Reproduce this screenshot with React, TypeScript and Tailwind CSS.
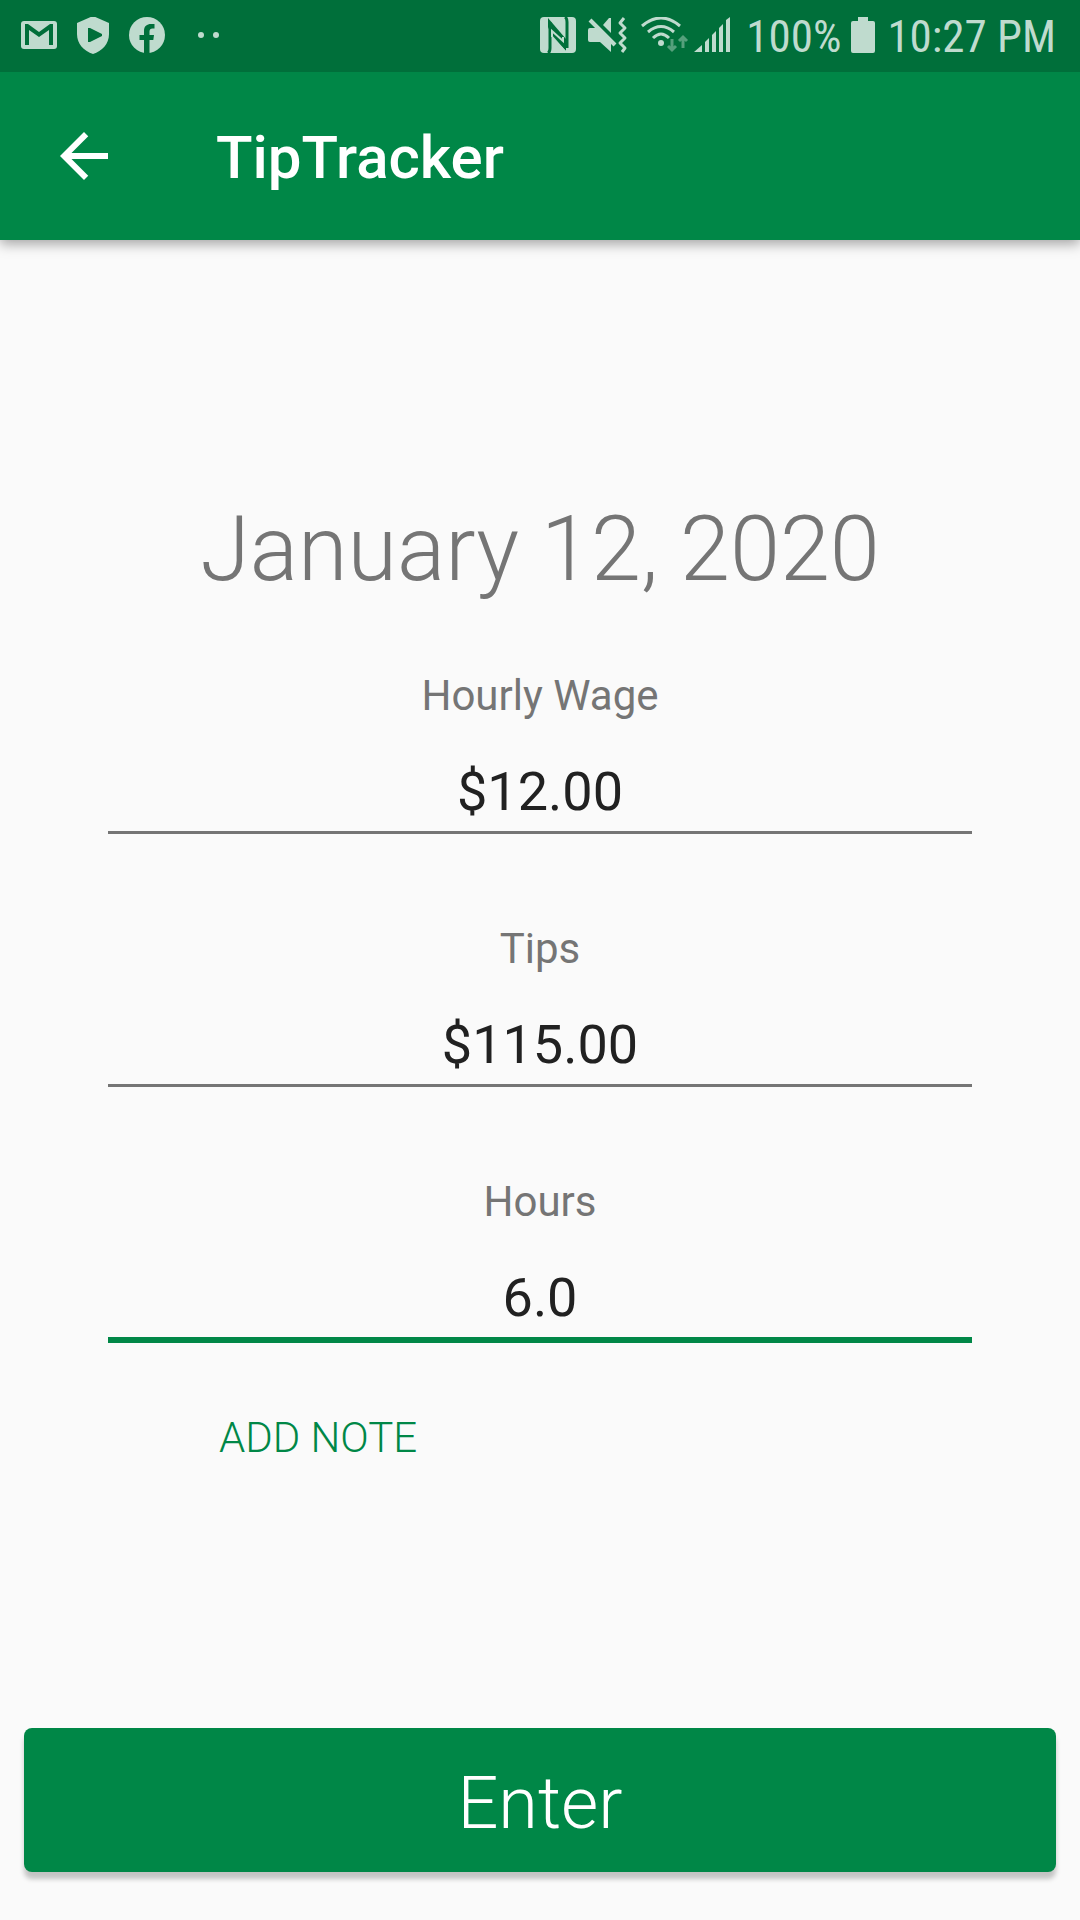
import React from "react"

interface FieldProps {
  id: string
  label: string
  value: string
  autoFocus?: boolean
}

const StatusBar = () => {
  return (
    <div className="flex h-[72px] items-center justify-between bg-[#006f3a] pl-5 pr-6 text-[#bfdbce]">
      <div className="flex items-center">
        <svg width="38" height="38" viewBox="0 0 38 38" fill="none">
          <rect x="1" y="4" width="36" height="28" rx="3" fill="currentColor" />
          <path d="M5 28V7H8L19 15L30 7H33V28H29V13L19 20L9 13V28Z" fill="#006f3a" />
        </svg>
        <svg width="34" height="38" viewBox="0 0 34 38" className="ml-[18px]">
          <path
            d="M17 -1L33 6V17C33 27 26 34 17 37C8 34 1 27 1 17V6Z"
            fill="currentColor"
          />
          <path
            d="M12 11H14L26 17V19L14 25H12Z"
            fill="#006f3a"
          />
        </svg>
        <svg width="36" height="38" viewBox="0 0 36 38" className="ml-[19px]">
          <circle cx="18" cy="18" r="18" fill="currentColor" />
          <path
            d="M15 37V23H10.500V18H15V14C15 9 18 7 22 7H25.500V11.500H23.500C21.500 11.500 20.500 12.500 20.500 14.500V18H25L24.300 23H20.500V37Z"
            fill="#006f3a"
          />
        </svg>
        <svg width="24" height="10" viewBox="0 0 24 10" className="ml-8">
          <circle cx="4" cy="4" r="3" fill="currentColor" />
          <circle cx="19" cy="4" r="3" fill="currentColor" />
        </svg>
      </div>
      <div className="flex items-center">
        <svg width="36" height="38" viewBox="0 0 36 38" fill="none">
          <rect width="36" height="36" rx="4" fill="currentColor" />
          <path
            d="M8 36Q10 35 10 31V5M27 31V5Q27 1 25 0"
            stroke="#006f3a"
            strokeWidth="3"
          />
          <path d="M8 1L26 22V34L11 17L8 10Z" fill="#006f3a" />
          <path d="M12 20V14L23 24V20" stroke="currentColor" strokeWidth="2" />
          <path d="M12 20L28 36H15Q12 36 12 31Z" fill="currentColor" />
        </svg>
        <svg
          width="40"
          height="38"
          viewBox="0 0 40 38"
          className="ml-3"
          fill="none"
        >
          <path
            d="M2 11H9L23 25V35L12 25H2Q0 25 0 23V13Q0 11 2 11Z"
            fill="currentColor"
          />
          <path d="M15 8L21 1H23V16Z" fill="currentColor" />
          <path d="M2 3L27 28" stroke="currentColor" strokeWidth="4" />
          <path
            d="M36 1L32 6L37 11L32 16L37 21L32 26L37 31L34 35"
            stroke="currentColor"
            strokeWidth="3"
            strokeLinejoin="round"
          />
        </svg>
        <svg
          width="50"
          height="38"
          viewBox="0 0 50 38"
          className="ml-3"
          fill="none"
          stroke="currentColor"
        >
          <path d="M2 9Q21 -7 40 9" strokeWidth="3" />
          <path d="M8 15Q21 4 34 15" strokeWidth="3" />
          <path d="M13 21Q21 13 29 21" strokeWidth="3" />
          <circle cx="21" cy="26" r="3" fill="currentColor" stroke="none" />
          <path
            d="M32 22V33M28 29L32 33L36 29M43 31V20M39 24L43 20L47 24"
            strokeWidth="3"
            opacity="0.45"
          />
        </svg>
        <svg
          width="36"
          height="38"
          viewBox="0 0 36 38"
          className="ml-1"
          fill="currentColor"
        >
          <path d="M0 35L8 28V35ZM11 25L15 21V35H11ZM18 18L22 14V35H18ZM25 11L29 7V35H25ZM32 3L36 0V35H32Z" />
        </svg>
        <span className="ml-4 font-['Roboto_Condensed',Roboto,sans-serif] text-[45px] leading-none">
          100%
        </span>
        <svg
          width="24"
          height="38"
          viewBox="0 0 24 38"
          className="ml-2.5"
          fill="currentColor"
        >
          <path d="M7 0H17V4H22Q24 4 24 6V34Q24 36 22 36H2Q0 36 0 34V6Q0 4 2 4H7Z" />
        </svg>
        <span className="ml-3 font-['Roboto_Condensed',Roboto,sans-serif] text-[45px] leading-none">
          10:27 PM
        </span>
      </div>
    </div>
  )
}

const Field = ({ id, label, value, autoFocus }: FieldProps) => {
  return (
    <div className="flex w-full flex-col items-center">
      <label htmlFor={id} className="text-[42px] leading-[50px] text-[#757575]">
        {label}
      </label>
      <input
        id={id}
        type="text"
        inputMode="decimal"
        defaultValue={value}
        className={
          autoFocus
            ? "mt-[39px] w-full border-b-6 border-[#008747] pb-[7px] text-center text-[54px] leading-[64px] outline-none"
            : "mt-[39px] w-full border-b-3 border-[#757575] pb-[7px] text-center text-[54px] leading-[64px] outline-none"
        }
      />
    </div>
  )
}

const App = () => {
  return (
    <div className="flex min-h-screen flex-col bg-[#fafafa] font-[Roboto,sans-serif] text-[#212121]">
      <header className="shadow-[0_4px_12px_rgba(0,0,0,0.35)]">
        <StatusBar />
        <div className="flex h-[168px] items-center bg-[#008747] px-12 text-white">
          <button type="button" aria-label="Back">
            <svg width="72" height="72" viewBox="0 0 24 24" fill="currentColor">
              <path d="M20 11H7.830l5.590-5.590L12 4l-8 8 8 8 1.410-1.410L7.830 13H20v-2z" />
            </svg>
          </button>
          <h1 className="ml-24 pt-1 text-[60px] font-medium">TipTracker</h1>
        </div>
      </header>
      <main className="flex flex-1 flex-col px-6 pb-12 pt-[257px]">
        <h2 className="text-center text-[90px] font-light leading-[105px] text-[#757575]">
          January 12, 2020
        </h2>
        <form className="flex flex-1 flex-col">
          <div className="mx-[84px] mt-[69px] flex flex-col gap-[90px]">
            <Field id="wage" label="Hourly Wage" value="$12.00" />
            <Field id="tips" label="Tips" value="$115.00" />
            <Field id="hours" label="Hours" value="6.0" autoFocus />
          </div>
          <button
            type="button"
            className="ml-[195px] mt-[70px] self-start text-[42px] font-light leading-[50px] text-[#008747]"
          >
            ADD NOTE
          </button>
          <button
            type="submit"
            className="mt-auto h-36 w-full rounded-lg bg-[#008747] pt-2 text-[72px] font-light leading-[84px] text-white shadow-[0_7px_5px_rgba(0,0,0,0.22)]"
          >
            Enter
          </button>
        </form>
      </main>
    </div>
  )
}

export default App
